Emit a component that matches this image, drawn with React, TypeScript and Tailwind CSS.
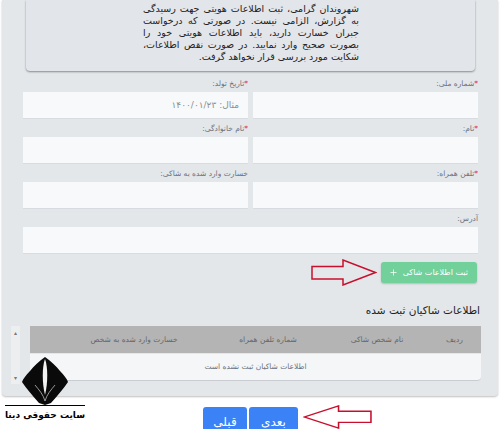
import { Plus } from 'lucide-react'

const noticeLines = [
  'شهروندان گرامی، ثبت اطلاعات هویتی جهت رسیدگی',
  'به گزارش، الزامی نیست. در صورتی که درخواست',
  'جبران خسارت دارید، باید اطلاعات هویتی خود را',
  'بصورت صحیح وارد نمایید. در صورت نقص اطلاعات،',
]

function Field({ label, required, placeholder }: { label: string; required?: boolean; placeholder?: string }) {
  return (
    <div className="flex flex-col">
      <label className="h-[18px] text-[7.5px] leading-[20px] text-[#6b7280]">
        {required && <span className="text-[#e11d48]">*</span>}
        {label}
      </label>
      <div className="h-[27px] bg-[#f8f9fa] border-b border-[#d8dbe0] pr-[9px] text-[9px] leading-[27px] text-[#8a8f96]">{placeholder}</div>
    </div>
  )
}

function RedArrow({ className }: { className: string }) {
  return (
    <svg viewBox="0 0 66 27" preserveAspectRatio="none" className={`shrink-0 ${className}`}>
      <path d="M1 7.5H32V1L64.5 13.5L32 26V20H1Z" fill="none" stroke="#c8102e" strokeWidth="1.5" />
    </svg>
  )
}

export default function App() {
  return (
    <div dir="rtl" className="relative w-[500px] h-[429px] overflow-hidden bg-white font-['DejaVu_Sans',sans-serif]">
      <div className="mx-[2px] h-[396px] rounded-b bg-[#e4e7ea] shadow-[0_1px_2px_rgba(0,0,0,0.25)] pr-[20px] pl-[21px]">
        <div className="h-[71px] mx-[3px] rounded-b bg-[#e2e5e9] shadow-[0_1px_2px_rgba(0,0,0,0.4)] pr-[116px] pl-[117px] pt-[3px] text-[9.5px] leading-[12px] text-[#222]">
          {noticeLines.map((line) => (
            <p key={line} className="text-justify [text-align-last:justify]">{line}</p>
          ))}
          <p>شکایت مورد بررسی قرار نخواهد گرفت.</p>
        </div>

        <div className="mt-[3px] grid grid-cols-2 gap-x-[5px]">
          <Field label="شماره ملی:" required />
          <Field label="تاریخ تولد:" required placeholder="مثال: ۱۴۰۰/۰۱/۲۳" />
          <Field label="نام:" required />
          <Field label="نام خانوادگی:" required />
          <Field label="تلفن همراه:" required />
          <Field label="خسارت وارد شده به شاکی:" />
          <div className="col-span-2">
            <Field label="آدرس:" />
          </div>
        </div>

        <div className="mt-[5px] mr-[1px] flex items-center gap-[4px]">
          <button className="flex h-[21px] w-[96px] items-center justify-start gap-[5px] rounded-[3px] bg-[#72d09b] pr-[9px] text-[8px] text-white shadow-[0_1px_2px_rgba(0,0,0,0.2)]">
            ثبت اطلاعات شاکی
            <Plus size={9} />
          </button>
          <RedArrow className="w-[66px] h-[27px]" />
        </div>

        <h3 className="mt-[14px] mr-[-2px] text-[10.5px] font-normal leading-[20px] text-[#222]">اطلاعات شاکیان ثبت شده</h3>

        <div className="mt-[6px] mr-[-3px] flex w-[470px] items-start gap-[10px]">
          <div className="w-[451px] shrink-0">
            <div className="grid h-[27px] grid-cols-[53px_102px_116px_152px_1fr] items-center bg-[#b4b4b4] text-center text-[7.5px] text-[#666]">
              <span>ردیف</span>
              <span>نام شخص شاکی</span>
              <span>شماره تلفن همراه</span>
              <span>خسارت وارد شده به شخص</span>
              <span />
            </div>
            <div className="mt-[1px] h-[27px] rounded-b border-b border-[#c9ccd0] bg-[#f5f6f7] text-center text-[7.5px] leading-[26px] text-[#6b7280]">
              اطلاعات شاکیان ثبت نشده است
            </div>
          </div>
          <div className="flex h-[58px] w-[9px] shrink-0 flex-col items-center justify-between bg-[#eceef0] py-[2px] text-[6px] text-[#777]">
            <span>▴</span>
            <span>▾</span>
          </div>
        </div>
      </div>

      <div dir="ltr" className="mt-[11px] flex items-start pl-[203px]">
        <button className="h-[30px] w-[44px] shrink-0 rounded-[3px] bg-[#3b82f6] text-[12px] text-white">قبلی</button>
        <button className="ml-[2px] h-[30px] w-[49px] shrink-0 rounded-[3px] bg-[#3b82f6] text-[12px] text-white">بعدی</button>
        <RedArrow className="ml-[5px] mt-[-2px] w-[69px] h-[24px] rotate-180" />
      </div>

      {/* logo sits over the corner of the panel */}
      <div className="absolute left-[5px] top-[357px] flex w-[80px] flex-col items-center">
        <svg width="46" height="48" viewBox="0 0 46 48">
          <path d="M23 0C29 4 34 9 38 14C42 18 45 22 46 25C42 31 36 38 29 46L23 48L17 46C10 38 4 31 0 25C1 22 4 18 8 14C12 9 17 4 23 0Z" fill="#0a0a0a" />
          <path d="M23 2C26 10 26 26 23 38C20 26 20 10 23 2Z" fill="#f2f2f2" />
          <path d="M13 28C17 33 21 37 23 44C25 37 29 33 33 28" fill="none" stroke="#bbb" strokeWidth="0.8" />
        </svg>
        <div className="w-full border-t border-black" />
        <div className="mt-[1px] whitespace-nowrap text-[9px] font-bold leading-[16px] text-black">سایت حقوقی دینا</div>
      </div>
    </div>
  )
}
